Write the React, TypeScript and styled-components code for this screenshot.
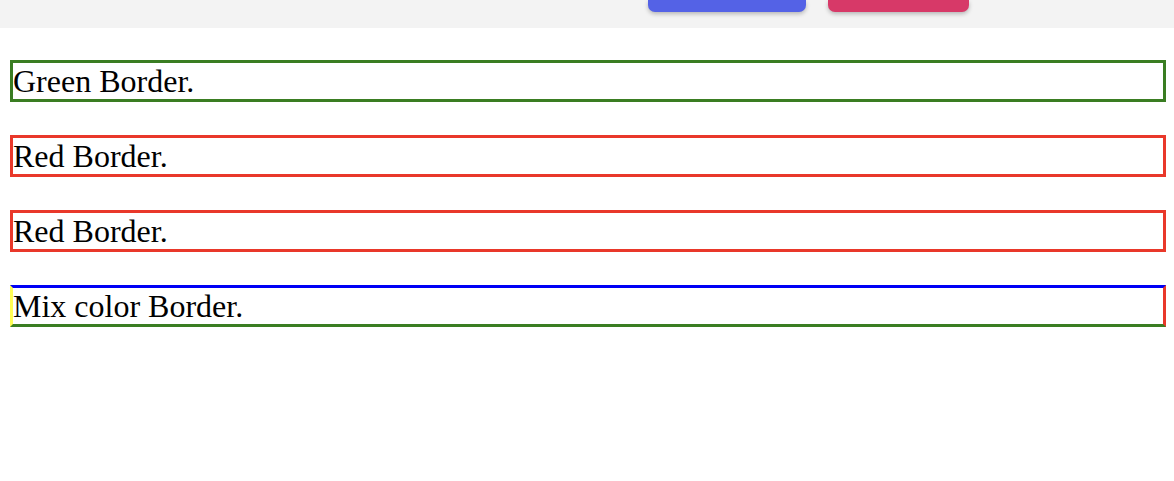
import React from 'react'
import styled, { createGlobalStyle } from 'styled-components'

const Global = createGlobalStyle`
  html, body {
    margin: 0;
    padding: 0;
    background: #ffffff;
  }
  body {
    font-family: "Liberation Serif", "Times New Roman", serif;
  }
`

const TopBar = styled.div`
  height: 28px;
  background: #f3f3f3;
  display: flex;
  align-items: flex-start;
  padding-left: 648px;
  gap: 22px;
`

const BarButton = styled.div<{ $color: string; $width: number }>`
  width: ${p => p.$width}px;
  height: 12px;
  background: ${p => p.$color};
  border-radius: 0 0 7px 7px;
  box-shadow: 0 2px 4px rgba(0, 0, 0, 0.25);
`

const List = styled.div`
  display: flex;
  flex-direction: column;
  gap: 33px;
  padding: 32px 8px 0 10px;
`

const Bordered = styled.div<{ $top: string; $right: string; $bottom: string; $left: string }>`
  height: 36px;
  line-height: 37px;
  font-size: 32px;
  color: #000;
  border-style: solid;
  border-width: 3px;
  border-color: ${p => `${p.$top} ${p.$right} ${p.$bottom} ${p.$left}`};
  white-space: nowrap;
  overflow: hidden;
`

const green = '#3a7d22'
const red = '#e9382a'

export default function App (): React.ReactElement {
  return (
    <>
      <Global />
      <TopBar>
        <BarButton $color="#5462e6" $width={158} />
        <BarButton $color="#d73968" $width={141} />
      </TopBar>
      <List>
        <Bordered $top={green} $right={green} $bottom={green} $left={green}>Green Border.</Bordered>
        <Bordered $top={red} $right={red} $bottom={red} $left={red}>Red Border.</Bordered>
        <Bordered $top={red} $right={red} $bottom={red} $left={red}>Red Border.</Bordered>
        <Bordered $top="#0000f5" $right={red} $bottom={green} $left="#fffd55">Mix color Border.</Bordered>
      </List>
    </>
  )
}
